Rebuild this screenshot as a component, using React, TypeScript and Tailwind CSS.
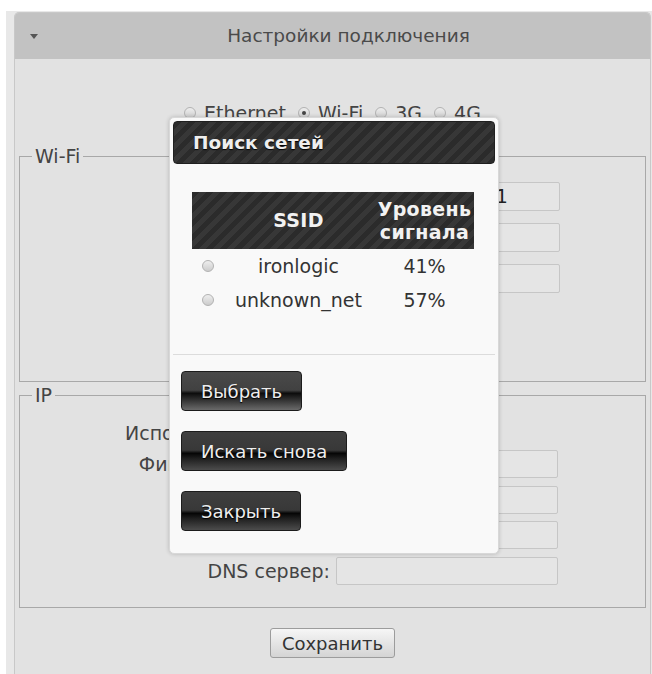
import React from "react";

const stripes =
  "bg-[repeating-linear-gradient(135deg,#2b2b2b_0px,#2b2b2b_5px,#373737_5px,#373737_10px)]";

function Radio({ checked = false }: { checked?: boolean }) {
  return (
    <span className="flex h-[12px] w-[12px] shrink-0 items-center justify-center rounded-full border border-[#b2b2b2] bg-[linear-gradient(#eeeeee,#cccccc)]">
      {checked && <span className="h-[4px] w-[4px] rounded-full bg-[#444]" />}
    </span>
  );
}

function Field({ label, value = "", width = 222, height = 28 }: { label: string; value?: string; width?: number; height?: number }) {
  return (
    <div className="flex items-center">
      <div className="w-[316px] pr-[6px] text-right">{label}</div>
      <div
        className="flex items-center rounded-[2px] border border-[#c6c6c6] bg-[#e5e5e5] px-[3px] text-[#222]"
        style={{ width, height }}
      >
        {value}
      </div>
    </div>
  );
}

function DarkButton({ children, light = false }: { children: React.ReactNode; light?: boolean }) {
  return (
    <button
      className={`flex h-[40px] items-center rounded-[4px] border border-[#1c1c1c] px-[19px] text-[18px] text-[#eeeeee] [text-shadow:0_1px_1px_#000] ${
        light
          ? "bg-[linear-gradient(#4a4a4a_0%,#414141_48%,#0c0c0c_56%,#2a2a2a_70%,#6a6a6a_100%)]"
          : "bg-[linear-gradient(#3f3f3f_0%,#383838_48%,#050505_56%,#1f1f1f_70%,#4c4c4c_100%)]"
      }`}
    >
      {children}
    </button>
  );
}

const networks = [
  { ssid: "ironlogic", level: "41%" },
  { ssid: "unknown_net", level: "57%" },
];

export default function App() {
  return (
    <div className="relative h-[674px] w-[652px] overflow-hidden bg-white font-['DejaVu_Sans',Verdana,sans-serif] text-[19px] text-[#444]">
      <div className="ml-[6px] mt-[11px] h-[663px] bg-[#e8e8e8] pl-[8px] pr-[1px] pt-[1px]">
        <div className="h-full rounded-t-[5px] border-x border-t border-[#c8c8c8] bg-[#e2e2e2]">
          {/* collapsible header */}
          <div className="flex h-[46px] items-center rounded-t-[4px] bg-[#c2c2c2]">
            <div className="w-[32px] pl-[15px]">
              <svg width="8" height="5" viewBox="0 0 8 5">
                <path d="M0 0h8L4 5z" fill="#555" />
              </svg>
            </div>
            <div className="flex-1 text-center text-[18.5px] text-[#4a4a4a]">Настройки подключения</div>
          </div>

          <div className="px-[4px]">
            {/* connection type */}
            <div className="mt-[42px] flex h-[24px] items-center justify-center gap-[12px]">
              {[
                ["Ethernet", false],
                ["Wi-Fi", true],
                ["3G", false],
                ["4G", false],
              ].map(([name, on]) => (
                <label key={name as string} className="flex items-center gap-[8px]">
                  <Radio checked={on as boolean} />
                  <span>{name}</span>
                </label>
              ))}
            </div>

            <fieldset className="mt-[19px] border border-[#a8a8a8]">
              <legend className="ml-[12px] px-[3px] leading-[24px]">Wi-Fi</legend>
              <div className="flex h-[213px] flex-col gap-[12px] pt-[14px]">
                <Field label="SSID:" value="Ironlogic_Office_1" width={224} height={29} />
                <Field label="Пароль:" width={224} height={29} />
                <Field label="Шифрование:" width={224} height={29} />
                <div className="mt-[12px] flex justify-center">
                  <button className="h-[30px] rounded-[3px] border border-[#a0a0a0] bg-[linear-gradient(#f4f4f4,#d6d6d6)] px-[11px] text-[18px] text-[#333]">
                    Поиск сетей
                  </button>
                </div>
              </div>
            </fieldset>

            <fieldset className="mt-[1px] border border-[#a8a8a8]">
              <legend className="ml-[12px] px-[3px] leading-[24px]">IP</legend>
              <div className="flex flex-col pb-[22px] pt-[14px]">
                <div className="flex h-[24px] items-center">
                  <div className="w-[316px] pr-[6px] text-right">Использовать DHCP:</div>
                  <span className="h-[13px] w-[13px] rounded-[2px] border border-[#999] bg-[#f2f2f2]" />
                </div>
                <div className="mt-[5px] flex flex-col gap-[7px]">
                  <Field label="Фиксированный IP:" />
                  <Field label="Маска подсети:" />
                  <Field label="Шлюз:" />
                  <Field label="DNS сервер:" />
                </div>
              </div>
            </fieldset>

            <div className="mt-[20px] flex justify-center">
              <button className="h-[30px] w-[125px] rounded-[3px] border border-[#9c9c9c] bg-[linear-gradient(#f6f6f6,#d4d4d4)] text-[18px] text-[#333]">
                Сохранить
              </button>
            </div>
          </div>
        </div>
      </div>

      {/* network search dialog */}
      <div className="absolute left-[169px] top-[117px] h-[437px] w-[330px] rounded-[5px] border border-[#d8d8d8] bg-[#f9f9f9] p-[3px] shadow-[0_0_4px_rgba(0,0,0,0.2)]">
        <div className={`flex h-[43px] items-center rounded-[4px] border border-[#1f1f1f] pl-[19px] ${stripes}`}>
          <span className="text-[18.5px] font-bold text-[#eeeeee] [text-shadow:0_1px_1px_#000]">Поиск сетей</span>
        </div>

        <div className="mx-[19px] mt-[28px] w-[282px]">
          <div className={`grid h-[57px] grid-cols-[30px_153px_99px] items-center font-bold leading-[23px] tracking-[0.3px] text-[#f2f2f2] ${stripes}`}>
            <span />
            <span className="text-center">SSID</span>
            <span className="text-center">
              Уровень
              <br />
              сигнала
            </span>
          </div>
          {networks.map((n) => (
            <div key={n.ssid} className="grid h-[34px] grid-cols-[30px_153px_99px] items-center text-[#333]">
              <span className="pl-[10px]">
                <Radio />
              </span>
              <span className="text-center">{n.ssid}</span>
              <span className="text-center">{n.level}</span>
            </div>
          ))}
        </div>

        <div className="mt-[37px] h-px bg-[#dcdcdc]" />

        <div className="mt-[16px] flex flex-col items-start gap-[20px] pl-[8px]">
          <DarkButton light>Выбрать</DarkButton>
          <DarkButton>Искать снова</DarkButton>
          <DarkButton>Закрыть</DarkButton>
        </div>
      </div>
    </div>
  );
}
